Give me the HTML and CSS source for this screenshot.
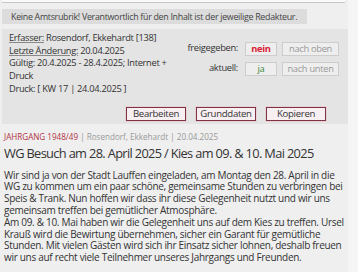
FILE: index.html
```html
<!DOCTYPE html>
<html lang="de">
<head>
    <meta charset="UTF-8">
    <meta name="viewport" content="width=device-width, initial-scale=1.0">
    <title>WG Besuch</title>
    <link rel="stylesheet" href="styles.css">
</head>
<body>
    <div class="page">
        <div class="top-edge"></div>

        <div class="notice">Keine Amtsrubrik! Verantwortlich für den Inhalt ist der jeweilige Redakteur.</div>

        <div class="info-box">
            <div class="info-row">
                <div class="info-left">
                    <div><span class="label">Erfasser:</span> Rosendorf, Ekkehardt [138]</div>
                    <div><span class="label">Letzte Änderung:</span> 20.04.2025</div>
                    <div>Gültig: 20.4.2025 - 28.4.2025; Internet + Druck</div>
                    <div>Druck: [ KW 17 | 24.04.2025 ]</div>
                </div>
                <div class="info-right">
                    <div class="status-row">
                        <span class="status-label">freigegeben:</span>
                        <span class="status no">nein</span>
                        <span class="move">nach oben</span>
                    </div>
                    <div class="status-row">
                        <span class="status-label">aktuell:</span>
                        <span class="status yes">ja</span>
                        <span class="move">nach unten</span>
                    </div>
                </div>
            </div>
            <div class="actions">
                <button class="action-btn">Bearbeiten</button>
                <button class="action-btn">Grunddaten</button>
                <button class="action-btn">Kopieren</button>
            </div>
        </div>

        <div class="meta"><span class="rubrik">JAHRGANG 1948/49</span> | Rosendorf, Ekkehardt | 20.04.2025</div>
        <h1>WG Besuch am 28. April 2025 / Kies am 09. &amp; 10. Mai 2025</h1>
        <p class="text">Wir sind ja von der Stadt Lauffen eingeladen, am Montag den 28. April in die WG&nbsp;zu kommen um ein paar schöne, gemeinsame Stunden zu verbringen bei Speis &amp; Trank. Nun hoffen wir dass ihr diese Gelegenheit nutzt und wir uns gemeinsam treffen bei gemütlicher Atmosphäre.<br>Am 09. &amp; 10. Mai haben wir die Gelegenheit uns auf dem Kies zu treffen. Ursel Krauß wird die Bewirtung übernehmen, sicher ein Garant für gemütliche Stunden. Mit vielen Gästen wird sich ihr Einsatz sicher lohnen, deshalb freuen wir uns auf recht viele Teilnehmer unseres Jahrgangs und Freunden.</p>
    </div>
</body>
</html>
```

FILE: styles.css
```css
body {
    margin: 0;
    background-color: #f5f5f5;
    font-family: "Open Sans", sans-serif;
    color: #333333;
}

.page {
    width: 348px;
    min-height: 272px;
    padding-left: 2px;
    box-sizing: border-box;
    background-color: #efefef;
}

.top-edge {
    height: 2px;
    width: 343px;
    background-color: #f9f9f9;
    border-bottom: 1px solid #c8c8c8;
}

/* Hinweis-Leiste */
.notice {
    width: 305px;
    box-sizing: border-box;
    margin-top: 6px;
    padding-left: 9px;
    background-color: #dcdcdc;
    font-size: 8.9px;
    letter-spacing: -0.3px;
    line-height: 15px;
    color: #444444;
    white-space: nowrap;
}

/* Verwaltungs-Box */
.info-box {
    margin-top: 5px;
    padding: 3px 9px 3px 7px;
    background-color: #e4e4e4;
    font-size: 9.3px;
    letter-spacing: -0.3px;
    line-height: 12.7px;
}

.info-row {
    display: flex;
}

.info-left {
    width: 163px;
}

.label {
    text-decoration: underline;
    text-decoration-color: #888888;
}

.info-right {
    flex: 1;
    padding-top: 9.5px;
    display: flex;
    flex-direction: column;
    gap: 6px;
}

.status-row {
    display: flex;
    justify-content: flex-end;
    align-items: center;
}

.status-label {
    margin-right: 7px;
}

.status, .move {
    box-sizing: border-box;
    height: 14px;
    line-height: 12px;
    border: 1px solid #cdcdcd;
    background-color: #eeeeee;
    text-align: center;
}

.status {
    width: 32px;
    margin-right: 5px;
}

.move {
    width: 57px;
    color: #999999;
}

.no {
    color: #d81b32;
    font-weight: bold;
}

.yes {
    color: #3a8a3a;
}

.actions {
    display: flex;
    justify-content: flex-end;
    gap: 10px;
    margin-top: 11px;
    padding-right: 13px;
}

.action-btn {
    box-sizing: border-box;
    width: 60px;
    height: 14px;
    padding: 0;
    font-family: "Open Sans", sans-serif;
    font-size: 9.6px;
    letter-spacing: -0.3px;
    line-height: 12px;
    color: #333333;
    background-color: #f7eff1;
    border: 1px solid #7d3545;
    box-shadow: 0 0 0 1px #e6d2d6;
}

/* Artikel */
.meta {
    margin-top: 8px;
    padding-left: 2px;
    font-size: 8.1px;
    line-height: 10px;
    color: #999999;
}

.rubrik {
    color: #b03042;
}

h1 {
    margin: 3px 0 0 2px;
    font-size: 12.8px;
    letter-spacing: -0.65px;
    font-weight: normal;
    line-height: 17px;
    color: #333333;
}

.text {
    margin: 8px 0 0 2px;
    padding-right: 1px;
    font-size: 10px;
    letter-spacing: -0.3px;
    line-height: 11.8px;
    color: #333333;
}
```
